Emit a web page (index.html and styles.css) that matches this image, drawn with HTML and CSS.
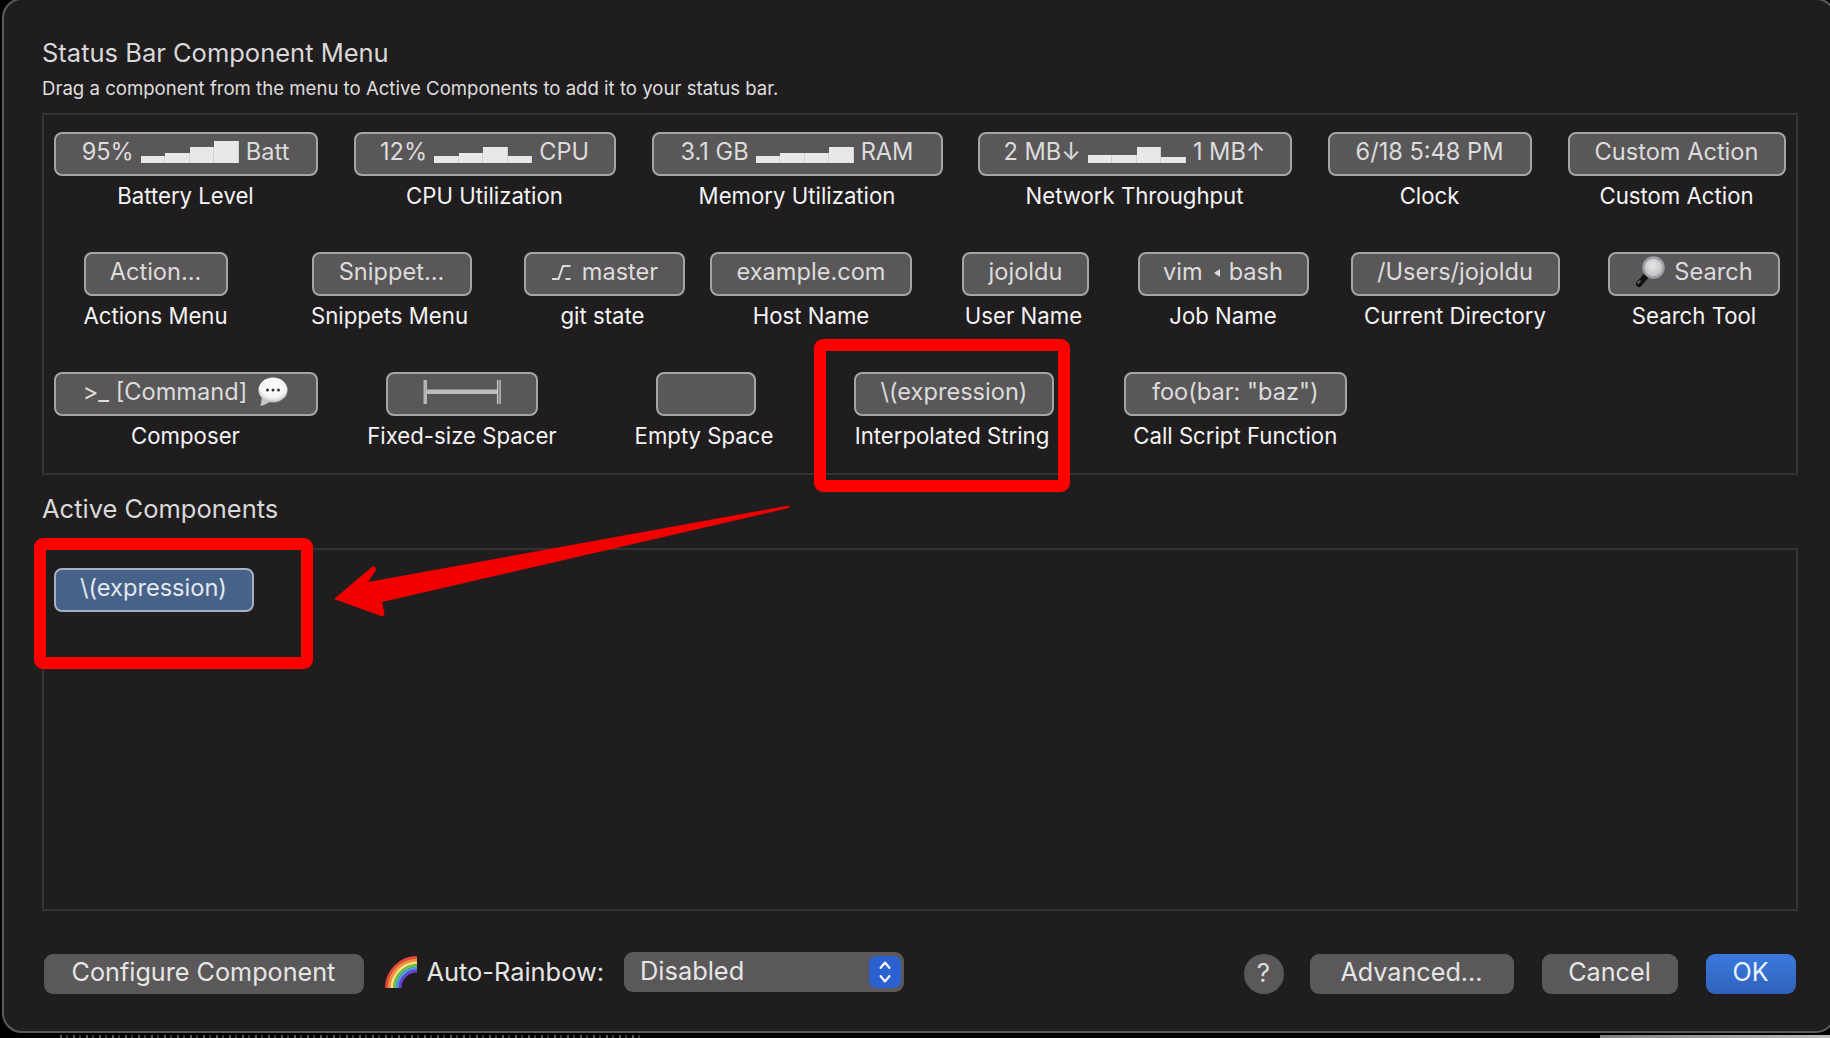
FILE: index.html
```html
<!DOCTYPE html>
<html lang="en">
<head>
    <meta charset="UTF-8">
    <title>Status Bar Component Menu</title>
    <link rel="stylesheet" href="styles.css">
</head>
<body>

<div class="window">
    <h2 class="title">Status Bar Component Menu</h2>
    <p class="subtitle">Drag a component from the menu to Active Components to add it to your status bar.</p>

    <div class="panel menu-panel">
        <div class="row">
            <div class="item item-batt">
                <div class="chip"><span>95%</span>
                    <div class="spark"><i class="h7"></i><i class="h10"></i><i class="h16"></i><i class="h22"></i></div>
                    <span>Batt</span></div>
                <div class="label">Battery Level</div>
            </div>
            <div class="item item-cpu">
                <div class="chip"><span>12%</span>
                    <div class="spark"><i class="h7"></i><i class="h10"></i><i class="h16"></i><i class="h7"></i></div>
                    <span>CPU</span></div>
                <div class="label">CPU Utilization</div>
            </div>
            <div class="item item-mem">
                <div class="chip"><span>3.1 GB</span>
                    <div class="spark"><i class="h7"></i><i class="h10"></i><i class="h10"></i><i class="h16"></i></div>
                    <span>RAM</span></div>
                <div class="label">Memory Utilization</div>
            </div>
            <div class="item item-net">
                <div class="chip"><span>2 MB↓</span>
                    <div class="spark"><i class="h8"></i><i class="h8"></i><i class="h16"></i><i class="h6"></i></div>
                    <span>1 MB↑</span></div>
                <div class="label">Network Throughput</div>
            </div>
            <div class="item item-clock">
                <div class="chip">6/18 5:48 PM</div>
                <div class="label">Clock</div>
            </div>
            <div class="item item-custom">
                <div class="chip">Custom Action</div>
                <div class="label">Custom Action</div>
            </div>
        </div>

        <div class="row">
            <div class="item item-action">
                <div class="chip">Action...</div>
                <div class="label">Actions Menu</div>
            </div>
            <div class="item item-snippet">
                <div class="chip">Snippet...</div>
                <div class="label label-left">Snippets Menu</div>
            </div>
            <div class="item item-git">
                <div class="chip">
                    <svg class="git-icon" width="20" height="16" viewBox="0 0 20 16"><path d="M1 15H7.5L12 2H19.5M14.5 15H19.5" fill="none" stroke="#dcdcdc" stroke-width="2"/></svg>
                    <span>master</span></div>
                <div class="label label-left">git state</div>
            </div>
            <div class="item item-host">
                <div class="chip">example.com</div>
                <div class="label">Host Name</div>
            </div>
            <div class="item item-user">
                <div class="chip">jojoldu</div>
                <div class="label label-left">User Name</div>
            </div>
            <div class="item item-job">
                <div class="chip"><span>vim</span><span class="job-arrow"></span><span>bash</span></div>
                <div class="label">Job Name</div>
            </div>
            <div class="item item-dir">
                <div class="chip">/Users/jojoldu</div>
                <div class="label">Current Directory</div>
            </div>
            <div class="item item-search">
                <div class="chip">
                    <svg class="search-icon" width="30" height="32" viewBox="0 0 30 32">
                        <defs>
                            <radialGradient id="lens" cx="45%" cy="40%" r="60%">
                                <stop offset="0" stop-color="#e6e6e6"/>
                                <stop offset="1" stop-color="#bdbdbd"/>
                            </radialGradient>
                        </defs>
                        <path d="M11 20L4 28" stroke="#111" stroke-width="6" stroke-linecap="round"/>
                        <path d="M3 27L5 25" stroke="#777" stroke-width="1.5" stroke-linecap="round"/>
                        <circle cx="18.5" cy="11.5" r="10" fill="url(#lens)" stroke="#9ba0a6" stroke-width="2.5"/>
                    </svg>
                    <span>Search</span></div>
                <div class="label">Search Tool</div>
            </div>
        </div>

        <div class="row">
            <div class="item item-batt">
                <div class="chip"><span>&gt;_ [Command]</span>
                    <svg class="bubble-icon" width="30" height="30" viewBox="0 0 30 30">
                        <defs>
                            <radialGradient id="bubble" cx="50%" cy="35%" r="65%">
                                <stop offset="0" stop-color="#fff"/>
                                <stop offset="0.7" stop-color="#f4f4f4"/>
                                <stop offset="1" stop-color="#bbb"/>
                            </radialGradient>
                        </defs>
                        <path d="M4 20L2.500 29C6 28 10 26.500 12 24.500Z" fill="#c8c8c8"/>
                        <ellipse cx="15" cy="13" rx="14.500" ry="12.500" fill="url(#bubble)"/>
                        <circle cx="9.500" cy="13" r="1.500" fill="#333"/>
                        <circle cx="15" cy="13" r="1.500" fill="#333"/>
                        <circle cx="20.500" cy="13" r="1.500" fill="#333"/>
                    </svg></div>
                <div class="label">Composer</div>
            </div>
            <div class="item item-fixed">
                <div class="chip">
                    <svg width="78" height="26" viewBox="0 0 78 26">
                        <rect x="0.500" y="1" width="3.500" height="24" fill="#b5b5b5"/>
                        <rect x="74" y="1" width="1.300" height="24" fill="#cfcfcf"/>
                        <rect x="76.400" y="1" width="1.300" height="24" fill="#cfcfcf"/>
                        <rect x="4" y="10.500" width="70" height="4.500" fill="#bdbdbd"/>
                    </svg></div>
                <div class="label">Fixed-size Spacer</div>
            </div>
            <div class="item item-empty">
                <div class="chip"></div>
                <div class="label label-left">Empty Space</div>
            </div>
            <div class="item item-interp">
                <div class="chip">\(expression)</div>
                <div class="label label-left">Interpolated String</div>
            </div>
            <div class="item item-call">
                <div class="chip">foo(bar: "baz")</div>
                <div class="label">Call Script Function</div>
            </div>
        </div>
    </div>

    <h2 class="title active-title">Active Components</h2>

    <div class="panel active-panel">
        <div class="item item-active">
            <div class="chip chip-active">\(expression)</div>
        </div>
    </div>

    <div class="footer">
        <button class="btn btn-configure">Configure Component</button>
        <svg class="rainbow" width="32" height="32" viewBox="0 0 32 32" fill="none" stroke-width="2.900">
            <path d="M1.500 32A30.500 30.500 0 0 1 32 1.500" stroke="#e5463d"/>
            <path d="M4.200 32A27.800 27.800 0 0 1 32 4.200" stroke="#f2903a"/>
            <path d="M6.900 32A25.100 25.100 0 0 1 32 6.900" stroke="#fbdf84"/>
            <path d="M9.600 32A22.400 22.400 0 0 1 32 9.600" stroke="#69c14f"/>
            <path d="M12.300 32A19.700 19.700 0 0 1 32 12.300" stroke="#4aa0e2"/>
            <path d="M15 32A17 17 0 0 1 32 15" stroke="#6a3fd2"/>
        </svg>
        <span class="rainbow-label">Auto-Rainbow:</span>
        <div class="popup">
            <span>Disabled</span>
            <div class="stepper">
                <svg width="14" height="26" viewBox="0 0 14 26" fill="none" stroke="#fff" stroke-width="2" stroke-linecap="round" stroke-linejoin="round">
                    <path d="M2.500 9L7 3.500L11.500 9"/>
                    <path d="M2.500 17L7 22.500L11.500 17"/>
                </svg>
            </div>
        </div>
        <button class="btn btn-help">?</button>
        <button class="btn btn-advanced">Advanced...</button>
        <button class="btn btn-cancel">Cancel</button>
        <button class="btn btn-ok">OK</button>
    </div>
</div>

<!-- strip of whatever is behind the window -->
<div class="behind-text"></div>
<div class="behind-bar"></div>

<!-- red annotations drawn on top of the screenshot -->
<svg class="annotations" width="1830" height="1038" viewBox="0 0 1830 1038">
    <rect x="820" y="345" width="244" height="141" rx="3" fill="none" stroke="#ff0000" stroke-width="12"/>
    <rect x="40" y="544" width="267" height="119" rx="3" fill="none" stroke="#ff0000" stroke-width="12"/>
    <path d="M789 505.500L368 582L376 570Q376 565 372 567L334 599L381 616Q386 616 384 611L382 602L789 508Z" fill="#f20000"/>
</svg>

</body>
</html>
```

FILE: styles.css
```css
/* iTerm2 style status bar sheet */

html, body {
    margin: 0;
    padding: 0;
    height: 100%;
    overflow: hidden;
    background-color: #000;
}
body {
    position: relative;
    font-family: Inter, "Noto Sans", sans-serif;
    color: #e6e6e6;
}
.window {
    box-sizing: border-box;
    width: 1834px;
    height: 1035px;
    margin: -2px 0 0 2px;
    padding: 0 38px;
    background-color: #201d1f;
    border: 2px solid #5b5b5b;
    border-radius: 20px;
}
.title {
    margin: 0;
    padding-top: 38px;
    font-size: 25.500px;
    font-weight: 400;
    line-height: 30px;
    color: #d9d9d9;
}
.subtitle {
    margin: 8px 0 0;
    font-size: 18.600px;
    line-height: 24px;
    color: #dedede;
}
.panel {
    box-sizing: border-box;
    width: 1755.5px;
    border: 2px solid #343334;
}
.menu-panel {
    margin-top: 13px;
    height: 362px;
    padding: 17px 0 0 9.500px;
    display: flex;
    flex-direction: column;
    gap: 41px;
}
.active-title {
    padding-top: 19px;
}
.active-panel {
    margin-top: 24px;
    height: 363px;
    padding: 18px 0 0 9.500px;
}
.row {
    display: flex;
}
.item {
    display: flex;
    flex-direction: column;
    align-items: center;
}
.chip {
    box-sizing: border-box;
    width: 100%;
    height: 44px;
    padding-bottom: 5px;
    display: flex;
    justify-content: center;
    align-items: center;
    background-color: #595758;
    border: 2px solid #a6a5a6;
    border-radius: 8px;
    font-size: 23.600px;
    white-space: nowrap;
    color: #dcdcdc;
}
.chip-active {
    background-color: #466288;
    border-color: #a4b1c5;
    color: #e4e8ee;
}
.label {
    margin-top: 5px;
    font-size: 22.200px;
    line-height: 30px;
    white-space: nowrap;
    color: #f4f4f4;
}
.label-left {
    margin-right: 4px;
}

/* little graphs inside the chips */
.spark {
    display: flex;
    align-items: flex-end;
    align-self: flex-end;
    height: 22px;
    margin: 0 7px 6px;
}
.spark i {
    display: block;
    width: 24.5px;
    background-color: #e8e8e8;
    box-shadow: inset -1px 0 0 #d2d2d2;
}
.h6 { height: 6px; }
.h7 { height: 7px; }
.h8 { height: 8px; }
.h10 { height: 10px; }
.h16 { height: 16px; }
.h22 { height: 22px; }

.git-icon { margin-right: 11px; margin-top: 1px; }
.search-icon { margin-right: 9px; }
.bubble-icon { margin-left: 11px; margin-top: 1px; }
.job-arrow {
    width: 0;
    height: 0;
    margin: 3px 9px 0 11px;
    border-top: 4px solid transparent;
    border-bottom: 4px solid transparent;
    border-right: 6px solid #dcdcdc;
}

/* row 1 */
.item-batt { width: 264px; }
.item-cpu { width: 262px; margin-left: 36px; }
.item-mem { width: 291px; margin-left: 36px; }
.item-net { width: 314px; margin-left: 35px; }
.item-clock { width: 204px; margin-left: 36px; }
.item-custom { width: 218px; margin-left: 36px; }
/* row 2 */
.item-action { width: 144px; margin-left: 30px; }
.item-snippet { width: 160px; margin-left: 84px; }
.item-git { width: 161px; margin-left: 52.500px; }
.item-host { width: 202px; margin-left: 25px; }
.item-user { width: 127px; margin-left: 50px; }
.item-job { width: 171px; margin-left: 48.500px; }
.item-dir { width: 209px; margin-left: 42px; }
.item-search { width: 172px; margin-left: 48.500px; }
/* row 3 */
.item-fixed { width: 152px; margin-left: 68.500px; }
.item-empty { width: 100px; margin-left: 118px; }
.item-interp { width: 200px; margin-left: 98px; }
.item-call { width: 222.500px; margin-left: 70px; }
.item-active { width: 200px; }

/* bottom buttons */
.footer {
    display: flex;
    height: 42px;
    width: 1752px;
    margin: 41px 0 0 1.500px;
    align-items: flex-end;
}
.btn {
    box-sizing: border-box;
    height: 40px;
    padding: 0 0 4px;
    background-color: #5a5859;
    border: none;
    border-radius: 9px;
    font-family: inherit;
    font-size: 25.200px;
    color: #e6e6e6;
}
.btn-configure { width: 320px; }
.rainbow {
    margin: 0 10px 6px 21px;
}
.rainbow-label {
    width: 178px;
    margin-bottom: 7px;
    font-size: 25.400px;
    line-height: 30px;
    white-space: nowrap;
    color: #e6e6e6;
}
.popup {
    box-sizing: border-box;
    align-self: flex-start;
    width: 280px;
    height: 40px;
    margin-left: 19.500px;
    padding: 0 3px 0 16px;
    display: flex;
    justify-content: space-between;
    align-items: center;
    background-color: #5a5859;
    border-radius: 9px;
    font-size: 25.400px;
    color: #e6e6e6;
}
.popup span {
    margin-bottom: 4px;
}
.stepper {
    width: 32px;
    height: 32px;
    display: flex;
    justify-content: center;
    align-items: center;
    background-color: #2b62d0;
    border-radius: 7px;
}
.btn-help {
    width: 40px;
    margin-left: auto;
    border-radius: 50%;
    font-size: 26px;
    color: #dcdcdc;
}
.btn-advanced { width: 204px; margin-left: 26px; }
.btn-cancel { width: 136px; margin-left: 28px; }
.btn-ok {
    width: 90px;
    margin-left: 28px;
    background: linear-gradient(#3b79df, #2e62b9);
    color: #eef3fb;
}

/* bits of the desktop under the window */
.behind-text {
    position: absolute;
    left: 60px;
    bottom: 0;
    width: 580px;
    height: 3px;
    background: repeating-linear-gradient(90deg, #5a5a5a 0 2px, #000 2px 6px, #3a3a3a 6px 8px, #000 8px 13px);
}
.behind-bar {
    position: absolute;
    left: 1600px;
    right: 0;
    bottom: 0;
    height: 3px;
    background: linear-gradient(90deg, #7d7d7d, #bcbcbc);
}
.annotations {
    position: absolute;
    left: 0;
    top: 0;
}
```
